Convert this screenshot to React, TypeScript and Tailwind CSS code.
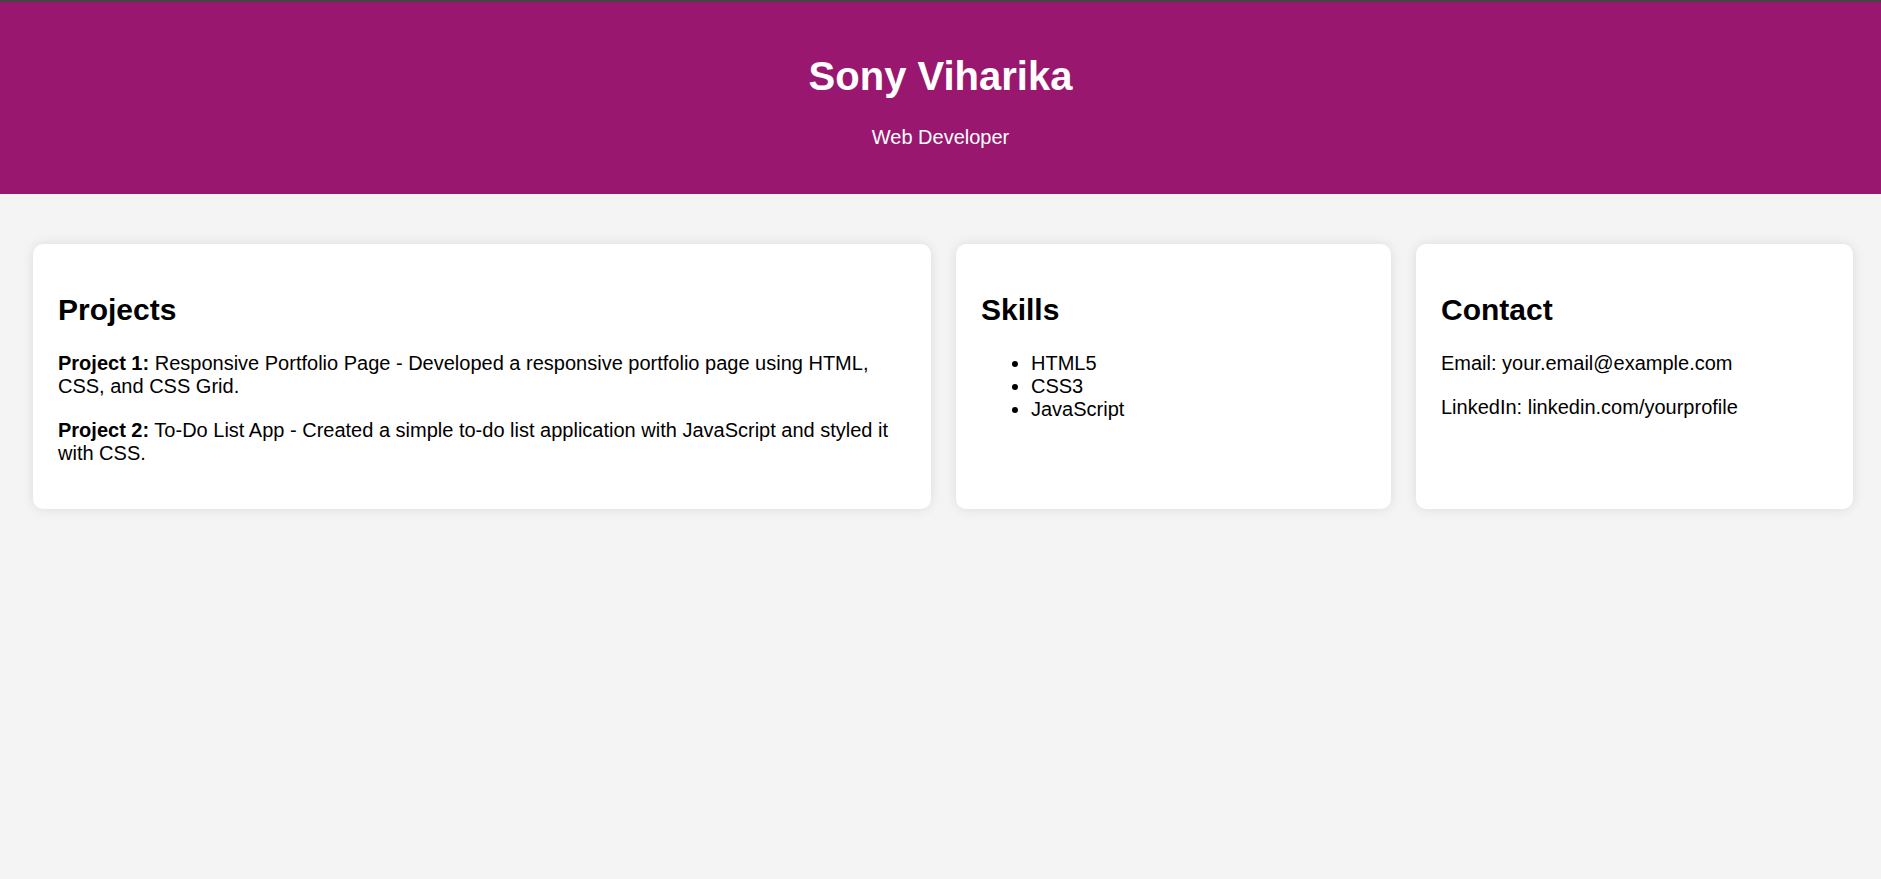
export default function App() {
  return (
    <div className="min-h-screen bg-[#f4f4f4] text-black" style={{ fontFamily: '"Liberation Sans", Arial, sans-serif' }}>
      <header className="border-t-2 border-[#454545] bg-[#99176f] pt-[24px] pb-[25px] text-center text-white">
        <h1 className="my-[27px] text-[40px] font-bold leading-[46px]">Sony Viharika</h1>
        <p className="my-[20px] text-[20px] leading-[23px]">Web Developer</p>
      </header>
      <main className="grid grid-cols-[898fr_435fr_437fr] items-stretch gap-[25px] pt-[50px] pl-[33px] pr-[28px] text-[20px] leading-[23px]">
        <section className="rounded-[10px] bg-white px-[25px] pt-[24px] pb-[24px] shadow-[0_0_12px_rgba(0,0,0,0.1)]">
          <h2 className="mt-[25px] mb-[25px] text-[30px] font-bold leading-[34px]">Projects</h2>
          <p className="my-[20px]">
            <strong className="font-bold">Project 1:</strong> Responsive Portfolio Page - Developed a responsive portfolio page using HTML, CSS, and CSS Grid.
          </p>
          <p className="mt-[21px] mb-[20px]">
            <strong className="font-bold">Project 2:</strong> To-Do List App - Created a simple to-do list application with JavaScript and styled it with CSS.
          </p>
        </section>
        <section className="rounded-[10px] bg-white px-[25px] pt-[24px] pb-[24px] shadow-[0_0_12px_rgba(0,0,0,0.1)]">
          <h2 className="mt-[25px] mb-[25px] text-[30px] font-bold leading-[34px]">Skills</h2>
          <ul className="my-[20px] list-disc pl-[50px]">
            <li>HTML5</li>
            <li>CSS3</li>
            <li>JavaScript</li>
          </ul>
        </section>
        <section className="rounded-[10px] bg-white px-[25px] pt-[24px] pb-[24px] shadow-[0_0_12px_rgba(0,0,0,0.1)]">
          <h2 className="mt-[25px] mb-[25px] text-[30px] font-bold leading-[34px]">Contact</h2>
          <p className="my-[20px]">Email: your.email@example.com</p>
          <p className="mt-[21px] mb-[20px]">LinkedIn: linkedin.com/yourprofile</p>
        </section>
      </main>
    </div>
  );
}
